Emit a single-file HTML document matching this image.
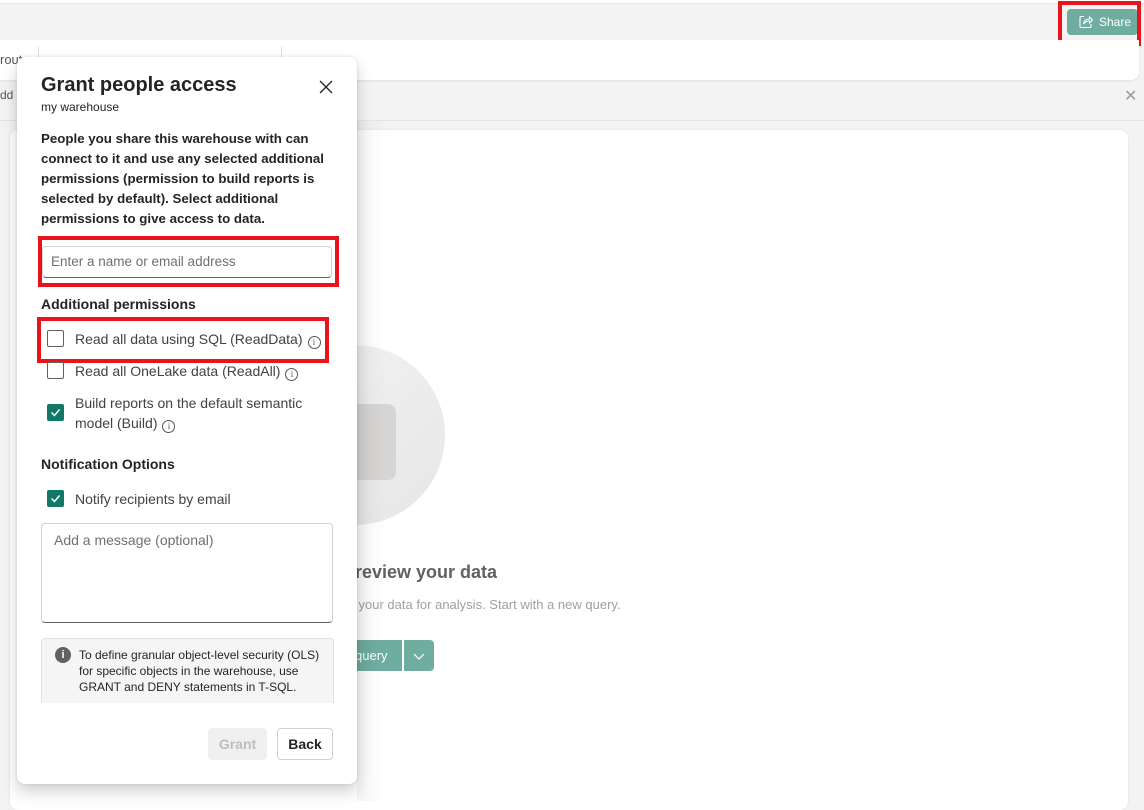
<!DOCTYPE html>
<html><head><meta charset="utf-8"><style>
*{box-sizing:border-box;margin:0;padding:0}
body{width:1144px;height:800px;overflow:hidden;background:#f3f3f3;font-family:"Segoe UI","Liberation Sans",sans-serif;position:relative;color:#242424}
.abs{position:absolute}
.red{position:absolute;border:4px solid #e8141c}
.cb{position:absolute;left:47px;width:17px;height:17px;border:1px solid #616161;border-radius:2px;background:#fff}
.cb.on{background:#117865;border-color:#117865}
.lbl{position:absolute;left:75px;font-size:14px;color:#424242;line-height:20px}
.info{display:inline-block;width:13px;height:13px;border:1px solid #555;border-radius:50%;font-size:9px;line-height:11px;text-align:center;vertical-align:-1px;margin-left:5px;font-family:"Liberation Serif",serif;color:#555}
</style></head><body>
<div class="abs" style="left:0;top:0;width:1144px;height:4px;background:#fff;border-bottom:1px solid #e6e6e6"></div>
<div class="abs" style="left:1067px;top:9px;width:71px;height:26px;background:#6fae9f;border-radius:4px;color:#fff;font-size:12px;line-height:26px;padding-left:32px">Share</div>
<svg class="abs" style="left:1078px;top:14px" width="16" height="16" viewBox="0 0 16 16" fill="none" stroke="#fff" stroke-width="1.1"><path d="M6 2.5H3a1 1 0 0 0-1 1v9a1 1 0 0 0 1 1h9a1 1 0 0 0 1-1V10"/><path d="M5.5 10c.5-3 2.5-5 6-5V3l3 3-3 3V7c-2.5 0-4.5 1-6 3z"/></svg>
<div class="red" style="left:1058px;top:1px;width:83px;height:45px"></div>
<div class="abs" style="left:0;top:40px;width:1139px;height:40px;background:#fff;border-radius:0 0 8px 0;box-shadow:0 1px 2px rgba(0,0,0,.08)"></div>
<div class="abs" style="left:0;top:52px;font-size:13px;color:#555">rout</div>
<div class="abs" style="left:38px;top:47px;width:1px;height:26px;background:#ddd"></div>
<div class="abs" style="left:281px;top:47px;width:1px;height:26px;background:#ddd"></div>
<div class="abs" style="left:55px;top:55px;font-size:13px;color:#555">Download SQL database project</div>
<div class="abs" style="left:0;top:88px;font-size:12px;color:#555">dd</div>
<div class="abs" style="left:1124px;top:86px;font-size:16px;color:#999">✕</div>
<div class="abs" style="left:0;top:120px;width:1144px;height:1px;background:#e4e4e4"></div>
<div class="abs" style="left:10px;top:130px;width:1118px;height:680px;background:#fff;border-radius:8px;box-shadow:0 0 2px rgba(0,0,0,.1)"></div>
<div class="abs" style="left:265px;top:345px;width:180px;height:180px;border-radius:50%;background:linear-gradient(135deg,#f4f4f4,#e6e6e6)"></div>
<div class="abs" style="left:330px;top:404px;width:66px;height:76px;border-radius:8px;background:#d6d5d4"></div>
<div class="abs" style="left:343px;top:562px;font-size:18px;font-weight:600;color:#616161;white-space:nowrap">Preview your data</div>
<div class="abs" style="left:352px;top:597px;font-size:13px;color:#a0a0a0;white-space:nowrap">l your data for analysis. Start with a new query.</div>
<div class="abs" style="left:300px;top:640px;width:102px;height:31px;background:#6fae9f;border-radius:4px 0 0 4px;color:#fff;font-size:13px;line-height:31px;padding-left:55px">query</div>
<div class="abs" style="left:404px;top:640px;width:30px;height:31px;background:#6fae9f;border-radius:0 4px 4px 0"></div>
<svg class="abs" style="left:411px;top:648px" width="16" height="16"><path d="M3 6l5 5 5-5" stroke="#fff" fill="none" stroke-width="1.2"/></svg>
<div class="abs" style="left:357px;top:121px;width:30px;height:680px;background:linear-gradient(90deg,rgba(0,0,0,.04),rgba(0,0,0,0))"></div>

<div class="abs" style="left:17px;top:57px;width:340px;height:727px;background:#fff;border-radius:8px;box-shadow:0 8px 16px rgba(0,0,0,.18),0 0 3px rgba(0,0,0,.12)"></div>
<div class="abs" style="left:41px;top:74px;font-size:20px;font-weight:600;color:#242424">Grant people access</div>
<div class="abs" style="left:41px;top:100px;font-size:12px;color:#242424">my warehouse</div>
<svg class="abs" style="left:319px;top:80px" width="14" height="14"><path d="M1 1l12 12M13 1L1 13" stroke="#242424" stroke-width="1.3"/></svg>
<div class="abs" style="left:41px;top:129px;width:300px;font-size:13.3px;font-weight:600;line-height:20px;color:#242424">People you share this warehouse with can connect to it and use any selected additional permissions (permission to build reports is selected by default). Select additional permissions to give access to data.</div>
<div class="abs" style="left:42px;top:246px;width:290px;height:32px;border:1px solid #d1d1d1;border-bottom-color:#616161;border-radius:4px;font-size:13.5px;color:#707070;line-height:30px;padding-left:8px">Enter a name or email address</div>
<div class="red" style="left:38px;top:236px;width:301px;height:51px"></div>
<div class="abs" style="left:41px;top:296px;font-size:14px;font-weight:600">Additional permissions</div>
<div class="cb" style="top:330px"></div><div class="lbl" style="top:329px">Read all data using SQL (ReadData)<span class="info">i</span></div>
<div class="red" style="left:37px;top:317px;width:292px;height:46px"></div>
<div class="cb" style="top:362px"></div><div class="lbl" style="top:361px">Read all OneLake data (ReadAll)<span class="info">i</span></div>
<div class="cb on" style="top:404px"></div><div class="lbl" style="top:393px;width:250px">Build reports on the default semantic model (Build)<span class="info">i</span></div>
<div class="abs" style="left:41px;top:456px;font-size:14px;font-weight:600">Notification Options</div>
<div class="cb on" style="top:490px"></div><div class="lbl" style="top:489px">Notify recipients by email</div>
<svg class="abs" style="left:49px;top:406px" width="13" height="13"><path d="M2.5 6.5l3 3 5-6" stroke="#fff" fill="none" stroke-width="1.5"/></svg>
<svg class="abs" style="left:49px;top:492px" width="13" height="13"><path d="M2.5 6.5l3 3 5-6" stroke="#fff" fill="none" stroke-width="1.5"/></svg>
<div class="abs" style="left:41px;top:523px;width:292px;height:100px;border:1px solid #d1d1d1;border-bottom-color:#616161;border-radius:4px;font-size:14px;color:#707070;padding:8px 12px">Add a message (optional)</div>
<div class="abs" style="left:41px;top:638px;width:293px;height:65px;background:#f5f5f5;border:1px solid #e0e0e0;border-bottom:none;border-radius:4px 4px 0 0"></div>
<div class="abs" style="left:55px;top:647px;width:16px;height:16px;border-radius:50%;background:#616161;color:#fff;font-size:11px;text-align:center;line-height:16px;font-weight:bold">i</div>
<div class="abs" style="left:79px;top:647px;width:250px;font-size:12px;line-height:16px;color:#242424">To define granular object-level security (OLS) for specific objects in the warehouse, use GRANT and DENY statements in T-SQL.</div>
<div class="abs" style="left:208px;top:728px;width:59px;height:32px;background:#f0f0f0;border-radius:4px;font-size:14px;font-weight:600;color:#bdbdbd;text-align:center;line-height:32px">Grant</div>
<div class="abs" style="left:277px;top:728px;width:56px;height:32px;border:1px solid #d1d1d1;border-radius:4px;font-size:14px;font-weight:600;text-align:center;line-height:30px">Back</div>
</body></html>
